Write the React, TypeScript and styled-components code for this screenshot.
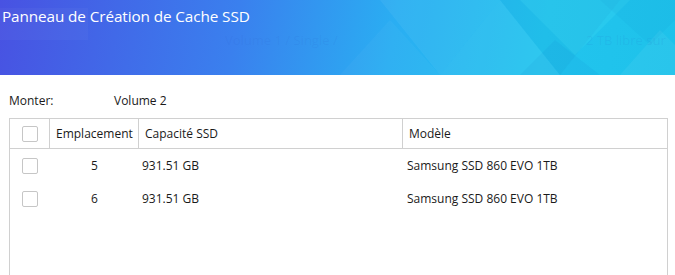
import styled, { createGlobalStyle } from "styled-components";

const GlobalStyle = createGlobalStyle`
  html, body {
    margin: 0;
    padding: 0;
    background: #ffffff;
  }
  body {
    font-family: "Open Sans", "Noto Sans", "Liberation Sans", sans-serif;
    color: #1a1a1a;
  }
`;

const Page = styled.div`
  width: 675px;
  height: 275px;
  overflow: hidden;
  background: #ffffff;
`;

const Banner = styled.header`
  position: relative;
  height: 75px;
  overflow: hidden;
  background: linear-gradient(100deg, #4852e2 0%, #3a80ee 35%, #2aaef2 58%, #22c4ee 80%, #1ec2ea 100%);
`;

const Pattern = styled.svg`
  position: absolute;
  inset: 0;
`;

const Title = styled.h1`
  position: relative;
  margin: 0;
  padding: 6px 0 0 2px;
  font-size: 15.3px;
  font-weight: 400;
  color: #ffffff;
  line-height: 20px;
  letter-spacing: -0.1px;
`;

const Ghost = styled.span<{ $left: number }>`
  position: absolute;
  top: 31px;
  left: ${(p) => p.$left}px;
  font-size: 13px;
  color: rgba(40, 90, 200, 0.1);
`;

const Body = styled.div`
  padding: 18px 7px 0 9px;
`;

const MountRow = styled.div`
  display: flex;
  font-size: 12px;
  line-height: 16px;
  margin-bottom: 9px;
`;

const MountLabel = styled.span`
  width: 105px;
`;

const Table = styled.div`
  border: 1px solid #d0d0d0;
  height: 200px;
`;

const cols = "40px 89px 264px 1fr";

const HeadRow = styled.div`
  display: grid;
  grid-template-columns: ${cols};
  height: 29px;
  border-bottom: 1px solid #d0d0d0;
`;

const HeadCell = styled.div<{ $last?: boolean; $center?: boolean }>`
  display: flex;
  align-items: center;
  justify-content: ${(p) => (p.$center ? "center" : "flex-start")};
  padding-left: ${(p) => (p.$center ? 0 : 6)}px;
  border-right: ${(p) => (p.$last ? "none" : "1px solid #d0d0d0")};
  font-size: 12px;
`;

const Row = styled.div`
  display: grid;
  grid-template-columns: ${cols};
  height: 33px;
  align-items: center;
  font-size: 12px;
`;

const Cell = styled.div<{ $center?: boolean; $pad?: number }>`
  display: flex;
  justify-content: ${(p) => (p.$center ? "center" : "flex-start")};
  padding-left: ${(p) => p.$pad ?? 0}px;
`;

const Check = styled.span`
  display: inline-block;
  width: 14px;
  height: 14px;
  border: 1px solid #c6c6c6;
  border-radius: 2px;
  background: #fff;
`;

const disks = [
  { slot: 5, size: "931.51 GB", model: "Samsung SSD 860 EVO 1TB" },
  { slot: 6, size: "931.51 GB", model: "Samsung SSD 860 EVO 1TB" },
];

export default function App() {
  return (
    <Page>
      <GlobalStyle />
      <Banner>
        <Pattern width="675" height="75" viewBox="0 0 675 75">
          <rect x="0" y="8" width="88" height="32" fill="rgba(255,255,255,0.03)" />
          <polygon points="380,0 440,75 500,0" fill="rgba(255,255,255,0.05)" />
          <polygon points="440,75 500,0 560,75" fill="rgba(255,255,255,0.06)" />
          <polygon points="500,0 560,75 620,0" fill="rgba(0,80,160,0.05)" />
          <polygon points="520,0 575,55 630,0" fill="rgba(120,255,255,0.1)" />
          <polygon points="555,40 600,75 520,75" fill="rgba(0,90,180,0.06)" />
          <polygon points="600,0 650,45 675,20 675,0" fill="rgba(0,90,180,0.05)" />
          <polygon points="620,75 660,30 675,45 675,75" fill="rgba(255,255,255,0.05)" />
          <polygon points="340,75 390,20 440,75" fill="rgba(255,255,255,0.03)" />
        </Pattern>
        <Title>Panneau de Création de Cache SSD</Title>
        <Ghost $left={225}>Volume 1 / Single /</Ghost>
        <Ghost $left={586}>2 TB libre sur</Ghost>
      </Banner>
      <Body>
        <MountRow>
          <MountLabel>Monter:</MountLabel>
          <span>Volume 2</span>
        </MountRow>
        <Table>
          <HeadRow>
            <HeadCell $center>
              <Check />
            </HeadCell>
            <HeadCell>Emplacement</HeadCell>
            <HeadCell>Capacité SSD</HeadCell>
            <HeadCell $last>Modèle</HeadCell>
          </HeadRow>
          {disks.map((d) => (
            <Row key={d.slot}>
              <Cell $center>
                <Check />
              </Cell>
              <Cell $center>{d.slot}</Cell>
              <Cell $pad={3}>{d.size}</Cell>
              <Cell $pad={4}>{d.model}</Cell>
            </Row>
          ))}
        </Table>
      </Body>
    </Page>
  );
}
